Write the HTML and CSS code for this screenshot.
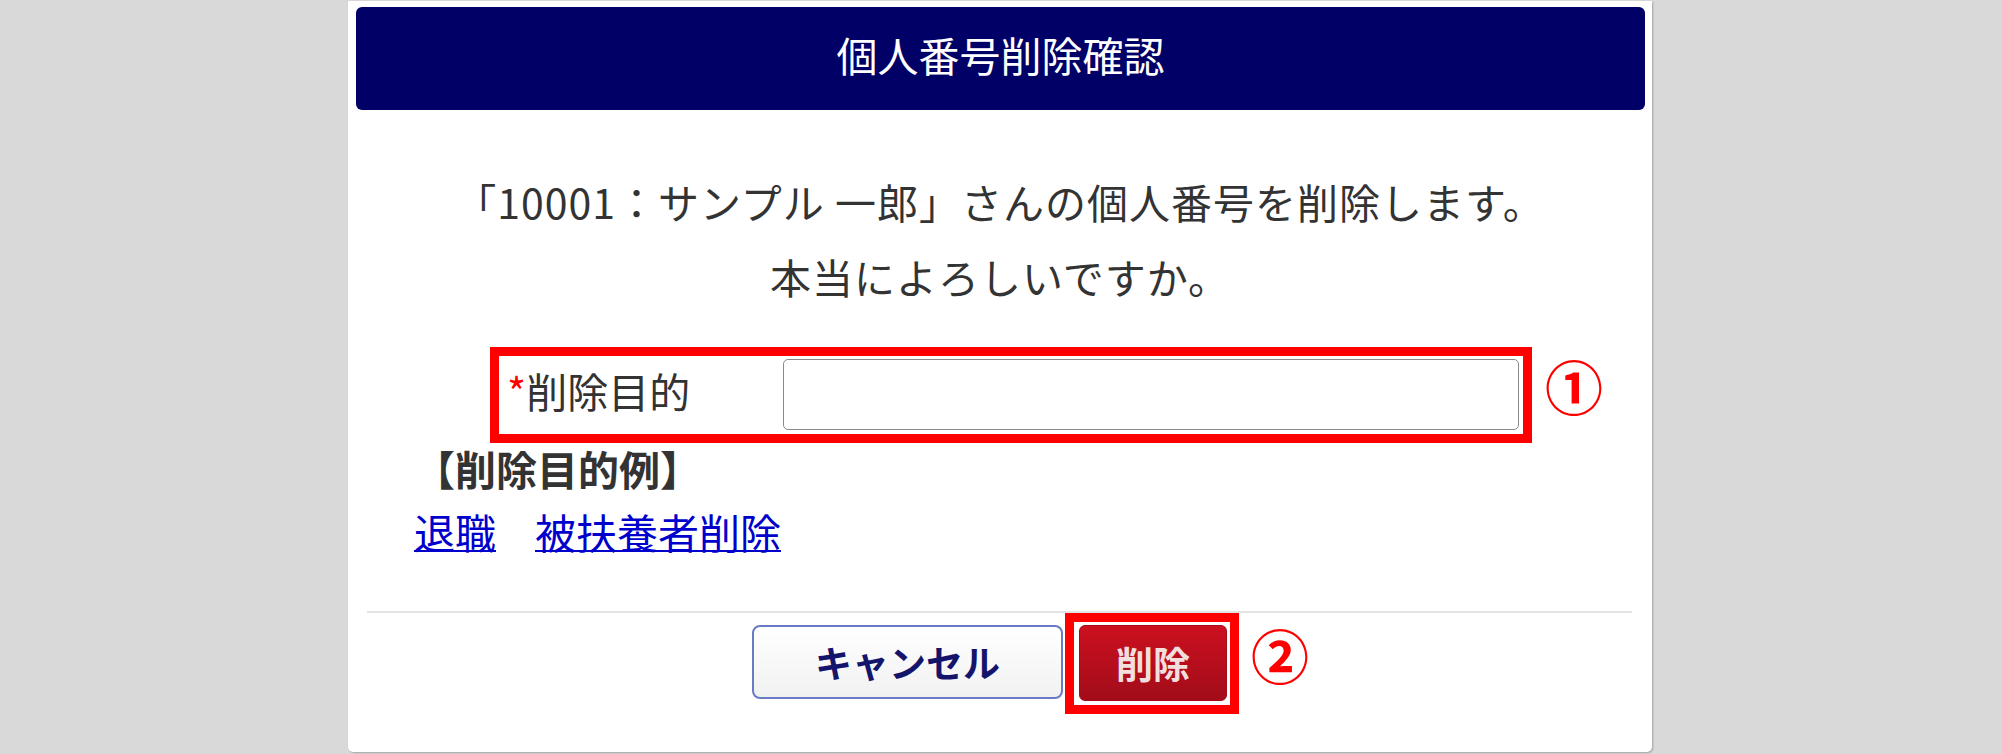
FILE: index.html
```html
<!DOCTYPE html>
<html lang="ja">
<head>
<meta charset="utf-8">
<title>個人番号削除確認</title>
<link rel="stylesheet" href="styles.css">
</head>
<body>
<div class="dialog">
  <div class="header">個人番号削除確認</div>
  <div class="message">
    <p class="msg-line">「10001：サンプル 一郎」さんの個人番号を削除します。</p>
    <p class="msg-line">本当によろしいですか。</p>
  </div>
  <div class="field-wrap">
    <div class="field">
      <label class="label"><span class="req">*</span>削除目的</label>
      <input class="input" type="text">
    </div>
    <span class="mark mark1">①</span>
  </div>
  <div class="examples">
    <div class="ex-title">【削除目的例】</div>
    <div class="ex-links"><a class="ex-link" href="#">退職</a><a class="ex-link ex-link2" href="#">被扶養者削除</a></div>
  </div>
  <hr class="sep">
  <div class="footer">
    <button class="btn btn-cancel" type="button">キャンセル</button>
    <span class="delete-frame"><button class="btn btn-delete" type="button">削除</button></span>
    <span class="mark mark2">②</span>
  </div>
</div>
</body>
</html>
```
FILE: styles.css
```css
html, body {
  margin: 0;
  padding: 0;
}
body {
  background: #d9d9d9;
  height: 754px;
  overflow: hidden;
  font-family: "Noto Sans CJK JP", "Noto Sans", sans-serif;
  color: #333;
}
.dialog {
  box-sizing: border-box;
  width: 1304px;
  height: 751px;
  margin: 1px 0 0 348px;
  background: #fff;
  border-radius: 0 0 5px 5px;
  box-shadow: 1px 1px 2px rgba(0, 0, 0, 0.25);
  padding-top: 6px;
}
.header {
  margin: 0 7px 0 8px;
  height: 103px;
  box-sizing: border-box;
  padding-bottom: 8px;
  background: #000066;
  border-radius: 6px;
  color: #fff;
  font-size: 41px;
  line-height: 95px;
  text-align: center;
}
.message {
  margin-top: 54px;
  text-align: center;
}
.msg-line {
  margin: 0;
  font-size: 41px;
  line-height: 75px;
  letter-spacing: 1px;
}
.field-wrap {
  display: flex;
  align-items: flex-start;
  margin: 33px 0 0 142px;
}
.field {
  box-sizing: border-box;
  display: flex;
  align-items: center;
  width: 1042px;
  height: 96px;
  border: 9px solid #ff0000;
  padding: 3px 4px 4px 8px;
}
.label {
  width: 276px;
  font-size: 41px;
  line-height: 60px;
  padding-bottom: 10px;
  color: #333;
}
.req {
  color: #ff0000;
}
.input {
  box-sizing: border-box;
  width: 736px;
  height: 71px;
  margin: 0;
  border: 1px solid #8a8a8a;
  border-radius: 5px;
  background: #fff;
}
.mark {
  color: #ff0000;
  font-weight: bold;
  font-size: 58px;
  line-height: 58px;
}
.mark1 {
  margin: 9px 0 0 13px;
}
.examples {
  margin-left: 66px;
}
.ex-title {
  font-size: 41px;
  font-weight: bold;
  line-height: 50px;
  color: #333;
}
.ex-links {
  font-size: 41px;
  line-height: 76px;
}
.ex-link {
  color: #0000cc;
  text-decoration: underline;
  text-decoration-thickness: 2px;
}
.ex-link2 {
  margin-left: 39px;
}
.sep {
  margin: 42px 20px 0 19px;
  height: 2px;
  border: 0;
  background: #e3e3e3;
}
.footer {
  display: flex;
  align-items: flex-start;
  margin-top: 0;
  padding-left: 404px;
}
.btn {
  box-sizing: border-box;
  margin: 0;
  padding: 0;
  font-family: "Noto Sans CJK JP", "Noto Sans", sans-serif;
  font-weight: bold;
  font-size: 37px;
  cursor: pointer;
}
.btn-cancel {
  width: 311px;
  height: 74px;
  margin-top: 12px;
  border: 2px solid #6a7bc6;
  border-radius: 8px;
  background: linear-gradient(#ffffff, #f1f1f1);
  color: #14146b;
}
.delete-frame {
  display: block;
  margin-left: 2px;
  padding: 3px 3px 4px 5px;
  border: 9px solid #ff0000;
}
.btn-delete {
  display: block;
  width: 148px;
  height: 76px;
  border: 1px solid #a50c18;
  border-radius: 6px;
  background: linear-gradient(#cc1020, #a20c19);
  color: #f3dede;
}
.mark2 {
  margin: 12px 0 0 12px;
}
```
